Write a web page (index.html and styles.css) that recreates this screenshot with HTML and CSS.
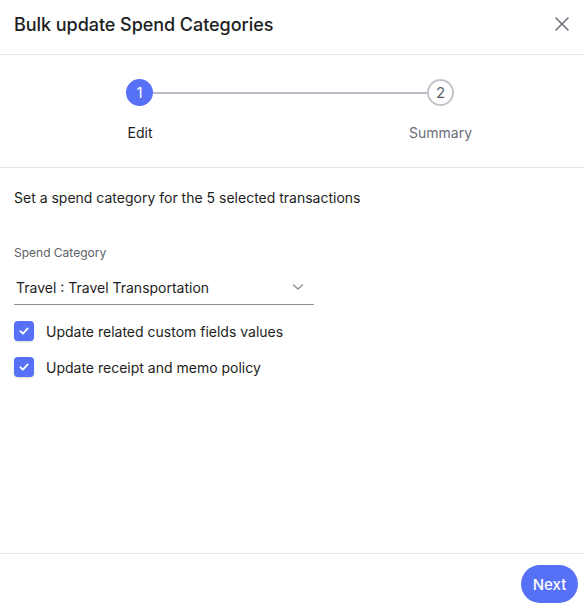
FILE: index.html
```html
<!DOCTYPE html>
<html lang="en">
<head>
<meta charset="utf-8">
<title>Bulk update Spend Categories</title>
<link rel="stylesheet" href="styles.css">
</head>
<body>
<div class="modal">
    <div class="header">
        <h1>Bulk update Spend Categories</h1>
        <button class="close" aria-label="Close">
            <svg width="16" height="16" viewBox="0 0 16 16"><path d="M2 2 L14 14 M14 2 L2 14" stroke="#6b6e78" stroke-width="1.5" stroke-linecap="round" fill="none"/></svg>
        </button>
    </div>
    <div class="stepper">
        <div class="track">
            <span class="dot active">1</span>
            <span class="line"></span>
            <span class="dot">2</span>
        </div>
        <div class="labels">
            <span class="label active">Edit</span>
            <span class="label">Summary</span>
        </div>
    </div>
    <div class="body">
        <p class="intro">Set a spend category for the 5 selected transactions</p>
        <div class="field">
            <label class="field-label">Spend Category</label>
            <div class="select">
                <span>Travel : Travel Transportation</span>
                <svg width="14" height="14" viewBox="0 0 14 14"><path d="M2.5 5 L7 9 L11.5 5" stroke="#8d9099" stroke-width="1.5" stroke-linecap="round" stroke-linejoin="round" fill="none"/></svg>
            </div>
        </div>
        <div class="check-row">
            <span class="check"><svg width="12" height="12" viewBox="0 0 12 12"><path d="M2.3 6.2 L4.9 8.6 L9.7 3.4" stroke="#fff" stroke-width="1.8" stroke-linecap="round" stroke-linejoin="round" fill="none"/></svg></span>
            <span>Update related custom fields values</span>
        </div>
        <div class="check-row">
            <span class="check"><svg width="12" height="12" viewBox="0 0 12 12"><path d="M2.3 6.2 L4.9 8.6 L9.7 3.4" stroke="#fff" stroke-width="1.8" stroke-linecap="round" stroke-linejoin="round" fill="none"/></svg></span>
            <span>Update receipt and memo policy</span>
        </div>
    </div>
    <div class="footer">
        <button class="next">Next</button>
    </div>
</div>
</body>
</html>
```
FILE: styles.css
```css
body {
    margin: 0;
    padding: 0;
    background: #fff;
    font-family: Inter, "Noto Sans", sans-serif;
    color: #1d1e22;
}

.modal {
    width: 584px;
    height: 610px;
    display: flex;
    flex-direction: column;
}

.header {
    height: 55px;
    flex: none;
    border-bottom: 1px solid #e4e5e8;
    display: flex;
    align-items: center;
    justify-content: space-between;
    padding: 0 14px 6px;
    box-sizing: border-box;
}

.header h1 {
    margin: 0;
    font-size: 18px;
    font-weight: 500;
    letter-spacing: -0.05px;
}

.close {
    border: 0;
    background: none;
    padding: 0;
    width: 16px;
    height: 16px;
    cursor: pointer;
}

.stepper {
    height: 113px;
    flex: none;
    border-bottom: 1px solid #e4e5e8;
    box-sizing: border-box;
    padding-top: 24px;
}

.track {
    display: flex;
    align-items: center;
    margin-left: 126px;
    width: 328px;
}

.dot {
    width: 27px;
    height: 27px;
    border-radius: 50%;
    box-sizing: border-box;
    border: 2px solid #c3c5cd;
    display: flex;
    align-items: center;
    justify-content: center;
    font-size: 15px;
    color: #5c5f69;
    flex: none;
}

.dot.active {
    background: #5670f6;
    border-color: #5670f6;
    color: #fff;
}

.line {
    flex: 1;
    height: 2px;
    background: #b9bbc6;
}

.labels {
    display: flex;
    justify-content: space-between;
    width: 362px;
    margin-left: 109px;
    margin-top: 18px;
}

.label {
    width: 62px;
    text-align: center;
    font-size: 14px;
    color: #6a6d77;
}

.label.active {
    color: #1d1e22;
}

.body {
    flex: 1;
    padding: 0 14px;
}

.intro {
    margin: 21px 0 0;
    font-size: 14px;
    line-height: 17px;
}

.field {
    margin-top: 39px;
    width: 300px;
}

.field-label {
    display: block;
    font-size: 12px;
    color: #5c5f69;
    line-height: 15px;
}

.select {
    margin-top: 12px;
    height: 33px;
    border-bottom: 1px solid #8d9099;
    box-sizing: border-box;
    display: flex;
    align-items: center;
    justify-content: space-between;
    padding: 0 9px 2px 2px;
    font-size: 14px;
}

.check-row {
    display: flex;
    align-items: center;
    gap: 12px;
    font-size: 14px;
    height: 20px;
    margin-top: 16px;
}

.check {
    width: 20px;
    height: 20px;
    border-radius: 4px;
    background: #5670f6;
    display: flex;
    align-items: center;
    justify-content: center;
    box-shadow: 0 1px 2px rgba(0, 0, 0, 0.15);
}

.footer {
    height: 57px;
    flex: none;
    box-sizing: border-box;
    border-top: 1px solid #e4e5e8;
    display: flex;
    align-items: center;
    justify-content: flex-end;
    padding-right: 6px;
}

.next {
    border: 0;
    background: #5670f6;
    color: #fff;
    font-family: inherit;
    font-size: 15px;
    font-weight: 500;
    height: 38px;
    width: 57px;
    border-radius: 19px;
    margin-top: 4px;
    cursor: pointer;
}
```
